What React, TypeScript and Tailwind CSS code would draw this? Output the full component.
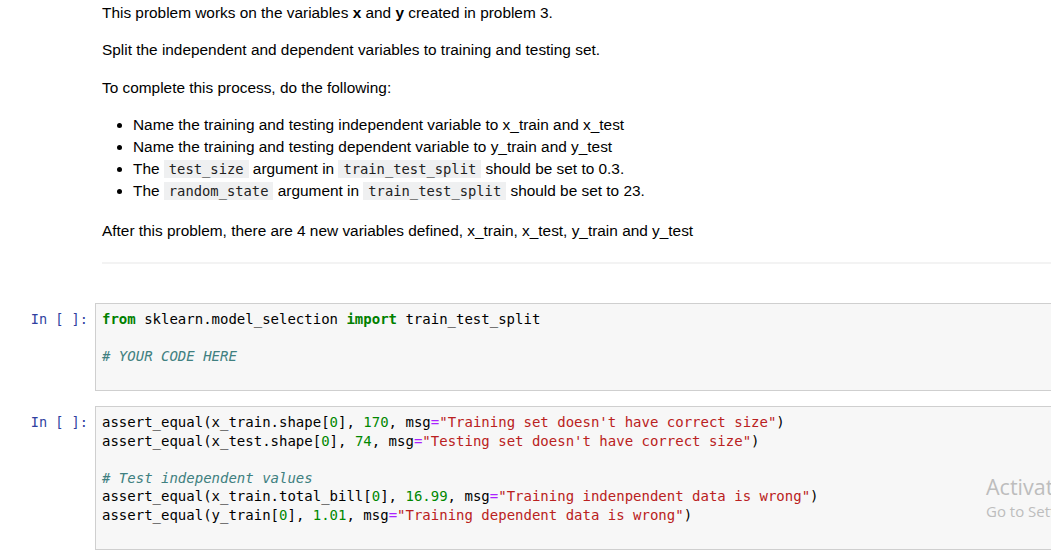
import React from "react";

// Jupyter-ish syntax colours
const kw = "text-[#008000] font-bold";
const num = "text-[#008800]";
const str = "text-[#ba2121]";
const op = "text-[#aa22ff]";
const cmt = "text-[#408080] italic";

const InlineCode = ({ children }: { children: React.ReactNode }) => (
  <code className="bg-[#eff0f1] px-[5px] py-[1px] font-['DejaVu_Sans_Mono',monospace] text-[13.8px] text-[#222]">
    {children}
  </code>
);

const CodeCell = ({ lines }: { lines: React.ReactNode[] }) => (
  <div className="flex w-[1120px]">
    {/* prompt */}
    <div className="w-[95px] shrink-0 pr-[7px] pt-[7px] text-right font-['DejaVu_Sans_Mono',monospace] text-[13.6px] leading-[18.5px] text-[#303f9f]">
      In&nbsp;[&nbsp;]:
    </div>
    <div className="flex-1 border border-[#cfcfcf] bg-[#f7f7f7] px-[6px] py-[6px] font-['DejaVu_Sans_Mono',monospace] text-[14px] leading-[18.5px] text-black">
      {lines.map((line, i) => (
        <div key={i} className="h-[18.5px] whitespace-pre">
          {line}
        </div>
      ))}
    </div>
  </div>
);

export default function App() {
  return (
    <div className="relative h-[552px] w-[1051px] overflow-hidden bg-white font-['Liberation_Sans',Arial,sans-serif] text-[15.4px] leading-[22px] text-black">
      {/* markdown cell */}
      <div className="pl-[102px] pt-[2px]">
        <p>
          This problem works on the variables <b>x</b> and <b>y</b> created in problem 3.
        </p>
        <p className="mt-[15.4px]">Split the independent and dependent variables to training and testing set.</p>
        <p className="mt-[15.4px]">To complete this process, do the following:</p>
        <ul className="mt-[15.4px] list-disc pl-[31px]">
          <li>Name the training and testing independent variable to x_train and x_test</li>
          <li>Name the training and testing dependent variable to y_train and y_test</li>
          <li>
            The <InlineCode>test_size</InlineCode> argument in <InlineCode>train_test_split</InlineCode> should be set to 0.3.
          </li>
          <li>
            The <InlineCode>random_state</InlineCode> argument in <InlineCode>train_test_split</InlineCode> should be set to 23.
          </li>
        </ul>
        <p className="mt-[18px]">After this problem, there are 4 new variables defined, x_train, x_test, y_train and y_test</p>
        <hr className="mt-[20px] border-t-2 border-[#f3f3f3]" />
      </div>

      {/* code cells */}
      <div className="mt-[39px] flex flex-col gap-[15px]">
        <CodeCell
          lines={[
            <>
              <span className={kw}>from</span> sklearn.model_selection <span className={kw}>import</span> train_test_split
            </>,
            "",
            <span className={cmt}># YOUR CODE HERE</span>,
            "",
          ]}
        />
        <CodeCell
          lines={[
            <>
              assert_equal(x_train.shape[<span className={num}>0</span>], <span className={num}>170</span>, msg
              <span className={op}>=</span>
              <span className={str}>"Training set doesn't have correct size"</span>)
            </>,
            <>
              assert_equal(x_test.shape[<span className={num}>0</span>], <span className={num}>74</span>, msg
              <span className={op}>=</span>
              <span className={str}>"Testing set doesn't have correct size"</span>)
            </>,
            "",
            <span className={cmt}># Test independent values</span>,
            <>
              assert_equal(x_train.total_bill[<span className={num}>0</span>], <span className={num}>16.99</span>, msg
              <span className={op}>=</span>
              <span className={str}>"Training indenpendent data is wrong"</span>)
            </>,
            <>
              assert_equal(y_train[<span className={num}>0</span>], <span className={num}>1.01</span>, msg
              <span className={op}>=</span>
              <span className={str}>"Training dependent data is wrong"</span>)
            </>,
            "",
          ]}
        />
      </div>

      {/* windows activation watermark */}
      <div className="absolute left-[986px] top-[472px] whitespace-nowrap font-['Open_Sans',sans-serif] text-[#bdbdbd]">
        <div className="text-[21.5px] leading-[29px]">Activate Windows</div>
        <div className="text-[15px] leading-[20px]">Go to Settings to activate Windows.</div>
      </div>
    </div>
  );
}
